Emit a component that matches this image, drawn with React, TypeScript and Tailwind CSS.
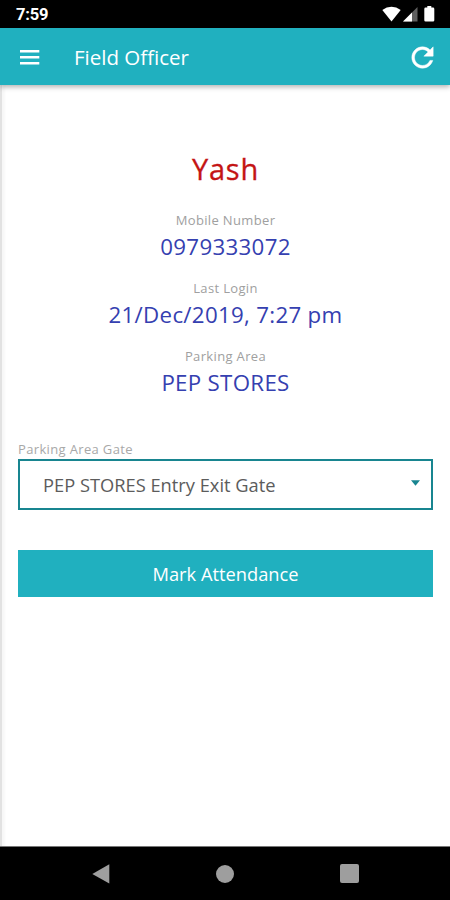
import React from 'react';
import { IoMdRefresh } from 'react-icons/io';

interface DetailProps {
  label: string;
  value: string;
}

function StatusBar() {
  return (
    <div className="flex h-7 shrink-0 items-center justify-between bg-black pl-4 pr-[15px] text-white">
      <span className="mt-[2px] font-[Roboto] text-[16.5px] font-bold leading-5 tracking-[-0.2px]">7:59</span>
      <div className="flex items-center">
        {/* Wifi */}
        <svg className="h-4 w-[19px]" viewBox="0 0 19 16" fill="currentColor">
          <path d="M0.3 4Q4.6 0.8 9.5 0.8T18.7 4L9.5 15.4Z" />
        </svg>
        {/* Mobile signal */}
        <svg className="ml-px h-4 w-4" viewBox="0 0 16 16" fill="currentColor">
          <path d="M15.5 1V15.5H1Z" fill="#606060" />
          <path d="M10 6.5V15.5H1Z" />
        </svg>
        {/* Battery */}
        <svg className="ml-[6px] h-4 w-[11px]" viewBox="0 0 11 16" fill="currentColor">
          <path d="M3.3 0h4v1.6H9a1.3 1.3 0 0 1 1.3 1.3v11.3A1.3 1.3 0 0 1 9 15.5H1.6a1.3 1.3 0 0 1-1.3-1.3V2.9a1.3 1.3 0 0 1 1.3-1.3h1.7z" />
        </svg>
      </div>
    </div>
  );
}

function Header() {
  return (
    <header className="z-10 flex h-[57px] shrink-0 items-center bg-[#20b0bf] pl-5 pr-3 pt-px text-white shadow-[0_2px_5px_rgba(0,0,0,0.3)]">
      <button aria-label="Menu">
        <svg className="h-[15px] w-5" viewBox="0 0 20 15" fill="currentColor">
          <path d="M0 0h19.3v2.5H0zM0 6h19.3v2.5H0zM0 12h19.3v2.5H0z" />
        </svg>
      </button>
      <h1 className="ml-[34px] text-[20.5px] leading-7">Field Officer</h1>
      <button className="ml-auto" aria-label="Refresh">
        <IoMdRefresh className="size-[31px] stroke-current stroke-[8px]" />
      </button>
    </header>
  );
}

function Detail({ label, value }: DetailProps) {
  return (
    <div className="flex h-[68px] flex-col items-center">
      <span className="text-[13px] leading-5 tracking-[0.35px] text-[#a0a0a0]">{label}</span>
      <span className="mt-px text-[22.3px] leading-8 tracking-[0.3px] text-[#3540b0]">{value}</span>
    </div>
  );
}

function NavBar() {
  return (
    <nav className="flex h-[54px] shrink-0 items-center justify-center gap-[106px] border-t border-[#777] bg-black text-[#9e9e9e]">
      <svg className="h-5 w-[18px]" viewBox="0 0 18 20" fill="currentColor">
        <path d="M17.3 0.3V19.5L0.3 10Z" />
      </svg>
      <div className="size-[18px] rounded-full bg-current" />
      <div className="size-[19px] rounded-[2px] bg-current" />
    </nav>
  );
}

export default function App() {
  return (
    <div className="flex h-[900px] w-[450px] flex-col overflow-hidden bg-white font-['Open_Sans',sans-serif]">
      <StatusBar />
      <Header />
      <main className="flex-1 border-l-2 border-[#e2e2e2] pl-4 pr-[17px] pt-16 shadow-[inset_5px_0_2px_-2px_rgba(0,0,0,0.03)]">
        <h2 className="text-center text-[29px] leading-10 tracking-[0.8px] text-[#c41414] [-webkit-text-stroke:0.3px_currentColor]">Yash</h2>
        <div className="mt-[21px]">
          <Detail label="Mobile Number" value="0979333072" />
          <Detail label="Last Login" value="21/Dec/2019, 7:27 pm" />
          <Detail label="Parking Area" value="PEP STORES" />
        </div>

        <div className="mt-[25px]">
          <p className="text-[13px] leading-5 tracking-[0.35px] text-[#a8a8a8]">Parking Area Gate</p>
          <button className="flex h-[51px] w-full items-center justify-between border-2 border-[#188590] pl-[23px] pr-[11px] text-[18.3px] text-[#5c5c5c]">
            <span>PEP STORES Entry Exit Gate</span>
            <svg className="mb-[3px] h-[6px] w-[9px]" viewBox="0 0 9 6" fill="#188590">
              <path d="M0 0.3h9L4.5 5.7Z" />
            </svg>
          </button>
        </div>

        <button className="mt-10 h-[47px] w-full bg-[#20b0bf] text-[18.3px] text-white">Mark Attendance</button>
      </main>
      <NavBar />
    </div>
  );
}
